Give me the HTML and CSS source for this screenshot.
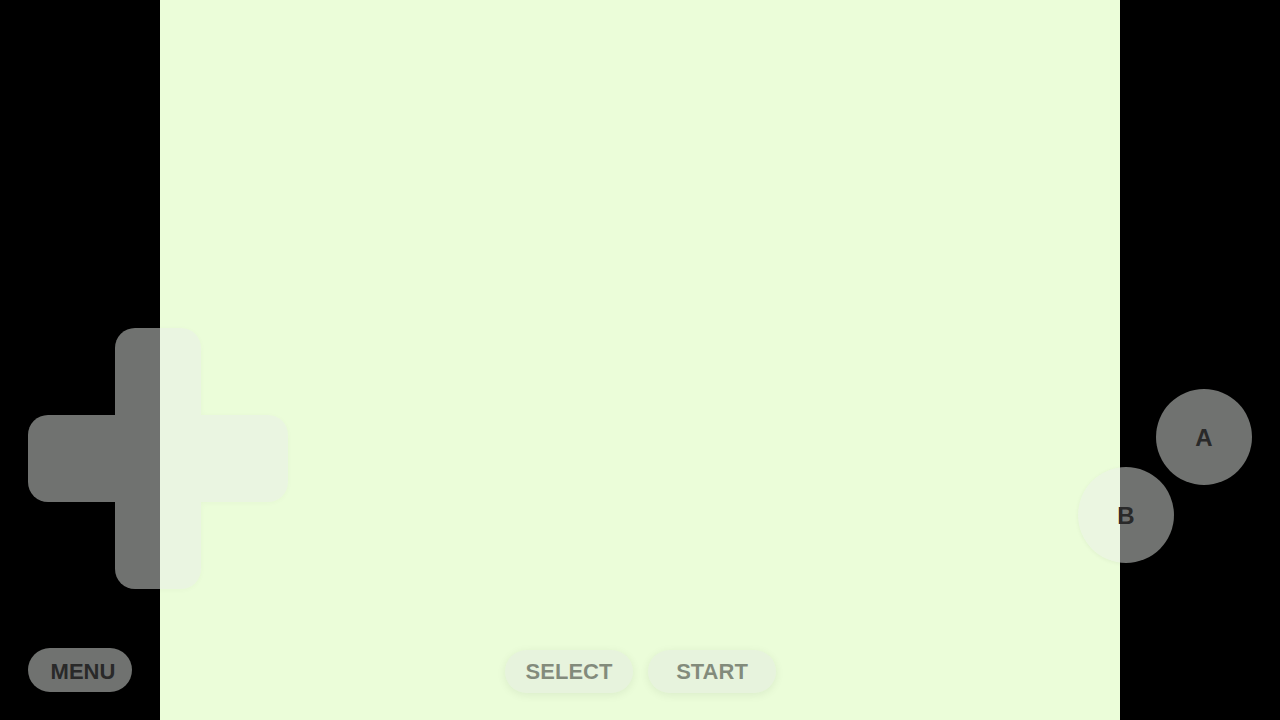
FILE: index.html
```html
<!DOCTYPE html>
<html lang="en">
<head>
<meta charset="utf-8">
<title>Emulator</title>
<link rel="stylesheet" href="styles.css">
</head>
<body>
<div class="console">
  <div class="bezel"></div>
  <div class="screen"></div>
  <div class="bezel"></div>

  <div class="controls">
    <div class="dpad">
      <span class="cell"></span><span class="cell up"></span><span class="cell"></span>
      <span class="cell left"></span><span class="cell mid"></span><span class="cell right"></span>
      <span class="cell"></span><span class="cell down"></span><span class="cell"></span>
    </div>

    <button class="round btn-a">A</button>
    <button class="round btn-b">B</button>

    <button class="pill menu">MENU</button>

    <div class="sysbar">
      <button class="pill sys">SELECT</button>
      <button class="pill sys">START</button>
    </div>
  </div>
</div>
</body>
</html>
```

FILE: styles.css
```css
html, body {
  margin: 0;
  padding: 0;
  background: #000;
}

body {
  width: 1280px;
  height: 720px;
  overflow: hidden;
  font-family: "Liberation Sans", Arial, sans-serif;
}

.console {
  position: relative;
  display: flex;
  width: 1280px;
  height: 720px;
}

.bezel {
  flex: 0 0 160px;
  background: #000;
}

.screen {
  flex: 0 0 960px;
  background: #ebfdd9;
}

.controls {
  position: absolute;
  inset: 0;
}

/* D-pad */
.dpad {
  position: absolute;
  left: 28px;
  top: 328px;
  display: grid;
  grid-template-columns: 87px 86px 87px;
  grid-template-rows: 87px 87px 87px;
  opacity: 0.48;
  filter: drop-shadow(0 1px 3px rgba(0, 0, 0, 0.06));
}

.cell { display: block; }

.up, .down, .left, .right, .mid {
  background: #eaeeea;
}

.up { border-radius: 20px 20px 0 0; }
.down { border-radius: 0 0 20px 20px; }
.left { border-radius: 20px 0 0 20px; }
.right { border-radius: 0 20px 20px 0; }

/* Buttons shared */
button {
  font-family: "Liberation Sans", Arial, sans-serif;
  font-weight: 700;
  border: 0;
  padding: 0;
  margin: 0;
  display: flex;
  align-items: center;
  justify-content: center;
}

.round {
  position: absolute;
  width: 96px;
  height: 96px;
  padding-top: 2px;
  border-radius: 50%;
  background: rgba(234, 238, 234, 0.48);
  color: #292929;
  font-size: 24px;
  box-shadow: 0 1px 4px rgba(0, 0, 0, 0.05);
}

.btn-a {
  left: 1156px;
  top: 389px;
}

.btn-b {
  left: 1078px;
  top: 467px;
}

.pill {
  height: 44px;
  border-radius: 22px;
  font-size: 22px;
}

.menu {
  position: absolute;
  left: 28px;
  top: 648px;
  width: 104px;
  padding: 3px 0 0 6px;
  background: rgba(234, 238, 234, 0.48);
  color: #292929;
}

.sysbar {
  position: absolute;
  left: 505px;
  top: 650px;
  display: flex;
  gap: 15px;
}

.sys {
  width: 128px;
  height: 43px;
  padding-top: 1px;
  background: rgba(228, 234, 226, 0.5);
  color: rgba(30, 36, 26, 0.5);
  box-shadow: 0 2px 10px rgba(0, 0, 0, 0.07);
}
```
